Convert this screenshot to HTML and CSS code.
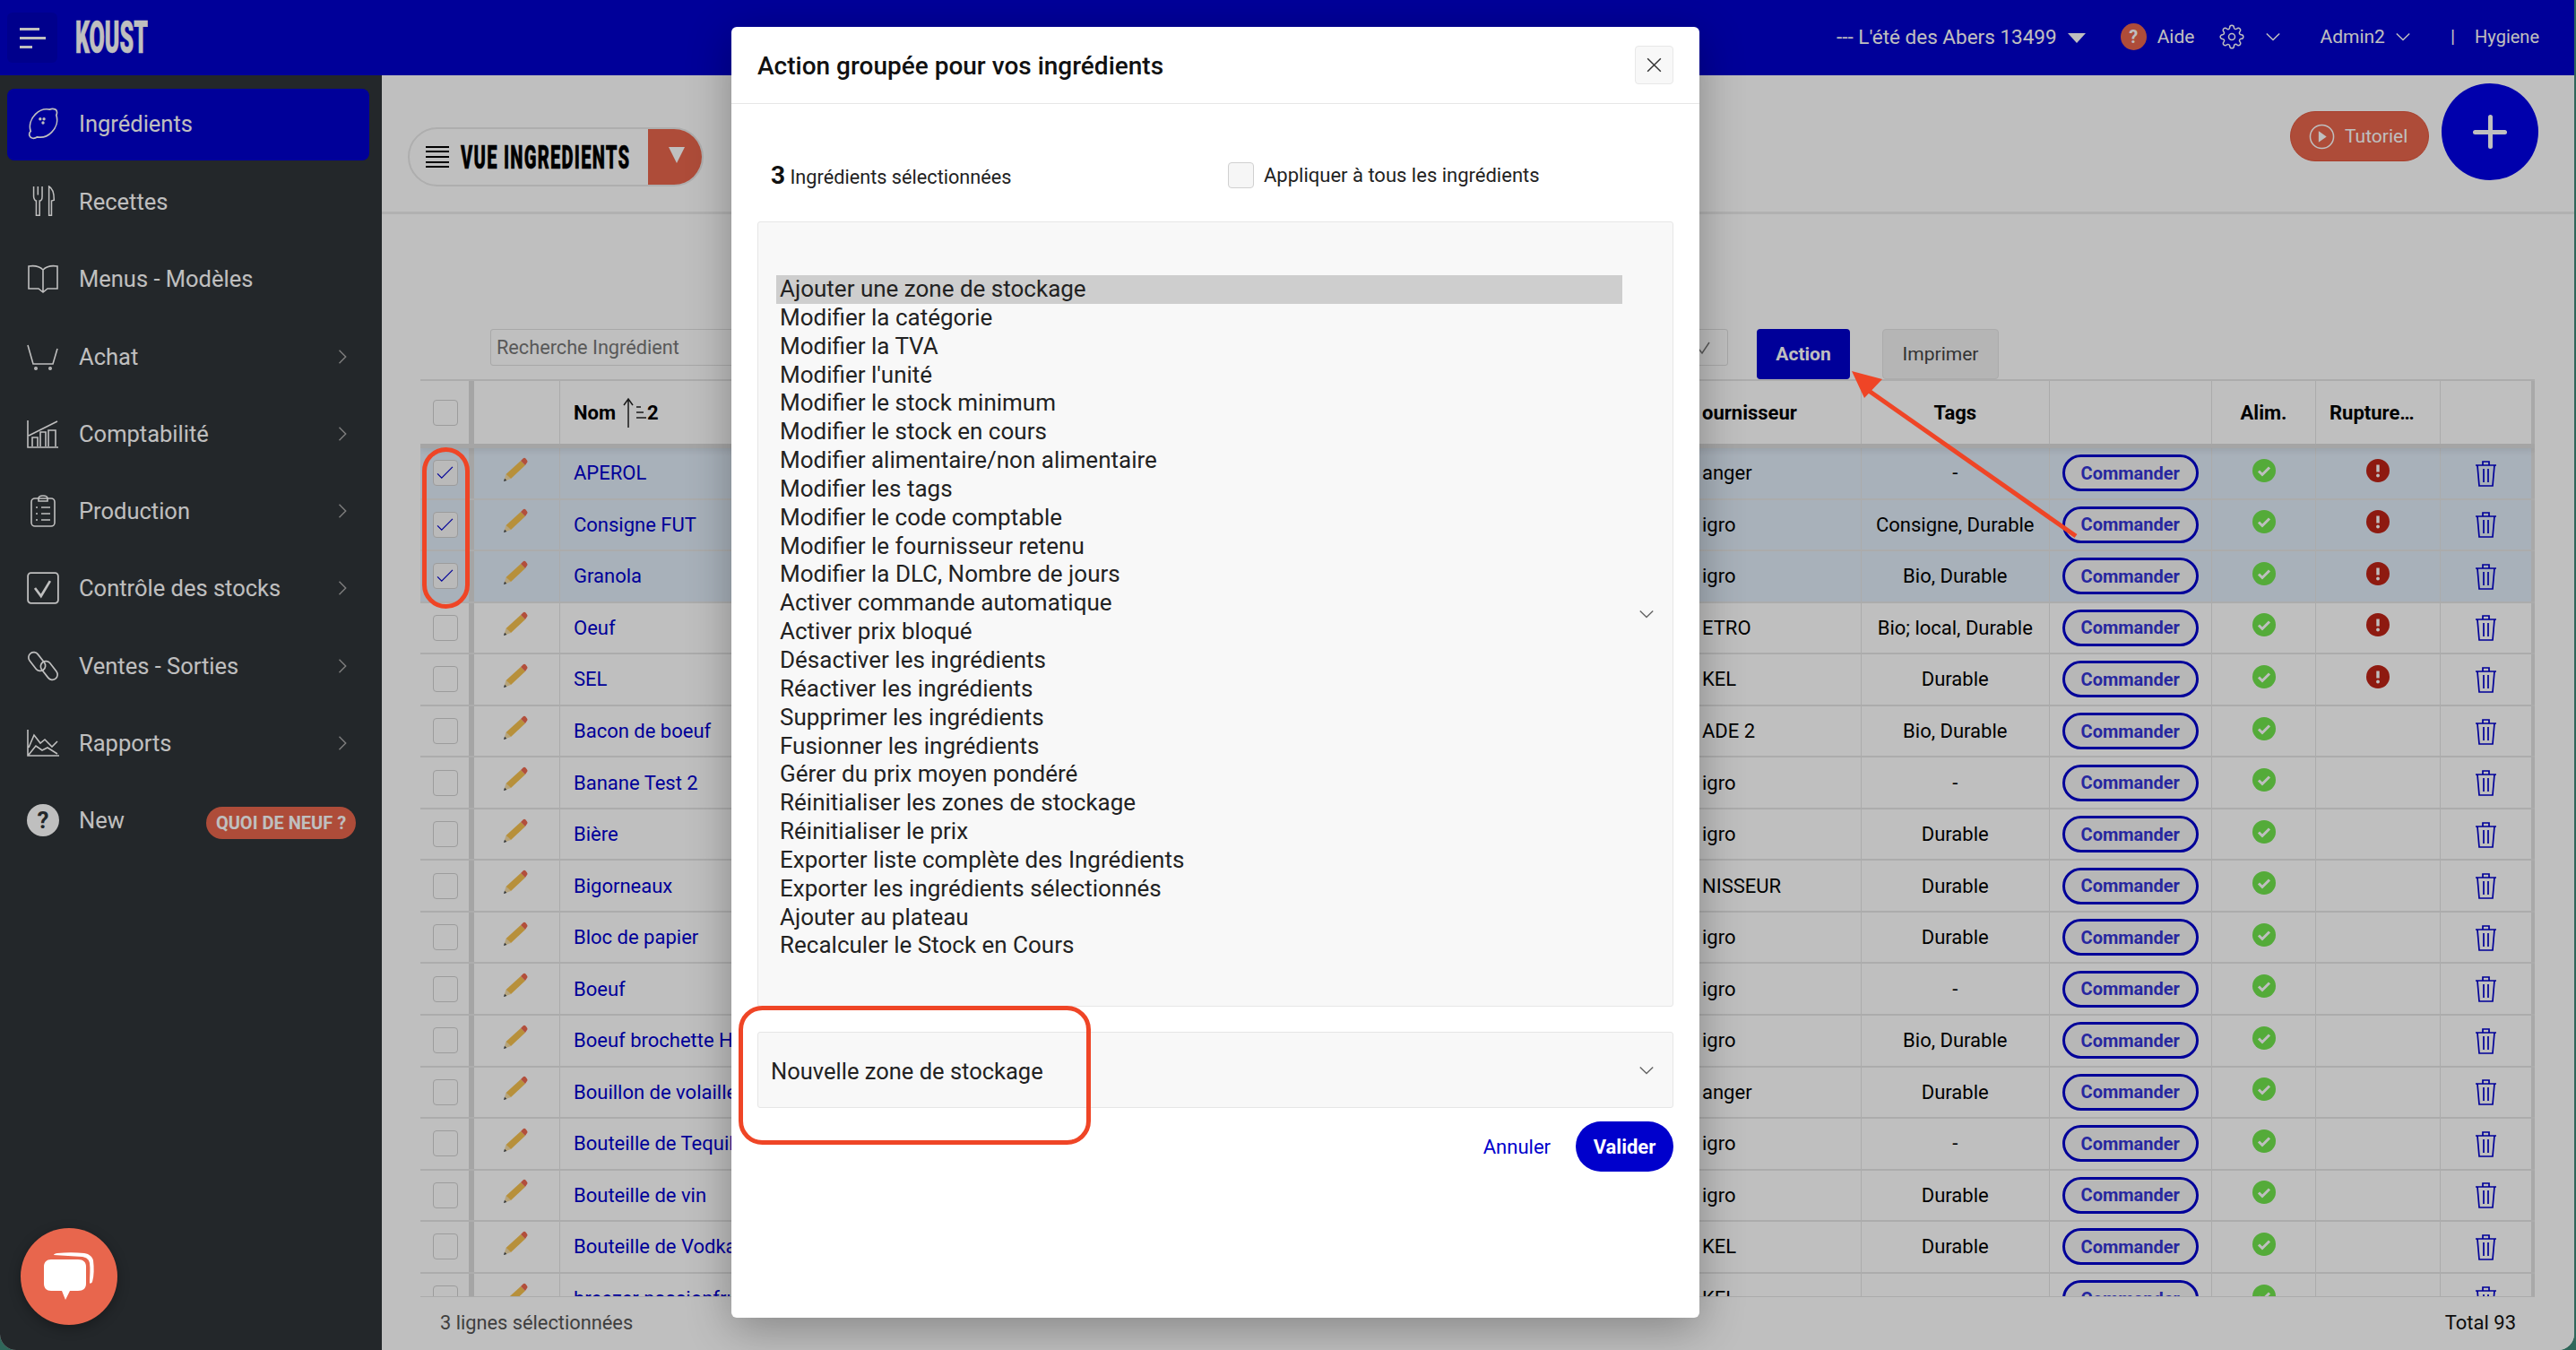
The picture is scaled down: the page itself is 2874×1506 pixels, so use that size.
FILE: index.html
```html
<!DOCTYPE html>
<html lang="fr">
<head>
    <meta charset="UTF-8">
    <title>Koust - Ingrédients</title>
    <link rel="stylesheet" href="styles.css">
</head>
<body>
<svg class="defs" width="0" height="0">
    <symbol id="chev" viewBox="0 0 20 20"><path d="M5 2l8 8-8 8" fill="none" stroke="currentColor" stroke-width="1.6"/></symbol>
    <symbol id="down" viewBox="0 0 20 20"><path d="M2 6l8 8 8-8" fill="none" stroke="currentColor" stroke-width="1.6"/></symbol>
    <symbol id="pencil" viewBox="0 0 28 28">
        <path d="M1 27l2.500-8 5.500 5z" fill="#f2dba8"/><path d="M1 27l1-3.300 2.300 2.200z" fill="#39424e"/>
        <path d="M3.500 19L20 4l5 5L9 24z" fill="#f5c14f"/><path d="M20 4l2.500-2.500a2 2 0 0 1 3 0l1.500 2a2 2 0 0 1 0 2.500L25 9z" fill="#ee6a50"/>
    </symbol>
    <symbol id="check" viewBox="0 0 26 26"><circle cx="13" cy="13" r="13" fill="#70e44d"/><path d="M7 13.500l4 4 8-8" fill="none" stroke="#fff" stroke-width="3"/></symbol>
    <symbol id="alert" viewBox="0 0 26 26"><circle cx="13" cy="13" r="13" fill="#be2316"/><path d="M13 6.500v8" stroke="#fff" stroke-width="3.400"/><circle cx="13" cy="18.500" r="1.900" fill="#fff"/></symbol>
    <symbol id="trash" viewBox="0 0 25 30"><path d="M1 6h23M9 6V2h7v4M3 6l2 23h15l2-23M10 10v15M15 10v15" fill="none" stroke="currentColor" stroke-width="1.700"/></symbol>
    <symbol id="tick" viewBox="0 0 20 16"><path d="M1 9l5 5L19 1" fill="none" stroke="currentColor" stroke-width="1.300"/></symbol>
</svg>

<div class="app">
    <header class="topbar">
        <div class="brand">
            <button class="burger"><i></i><i></i><i></i></button>
            <span class="logo">KOUST</span>
        </div>
        <nav class="topnav">
            <span class="site">--- L'été des Abers 13499</span>
            <span class="tri"></span>
            <span class="help">?</span>
            <span class="aide">Aide</span>
            <svg class="gear" viewBox="0 0 24 24" fill="none" stroke="currentColor" stroke-width="1.300"><circle cx="12" cy="12" r="3"/><path d="M19.400 15a1.650 1.650 0 0 0 .33 1.820l.06.06a2 2 0 0 1 0 2.830 2 2 0 0 1-2.830 0l-.06-.06a1.650 1.650 0 0 0-1.820-.33 1.650 1.650 0 0 0-1 1.510V21a2 2 0 0 1-2 2 2 2 0 0 1-2-2v-.09A1.650 1.650 0 0 0 9 19.400a1.650 1.650 0 0 0-1.820.33l-.06.06a2 2 0 0 1-2.830 0 2 2 0 0 1 0-2.830l.06-.06a1.650 1.650 0 0 0 .33-1.820 1.650 1.650 0 0 0-1.510-1H3a2 2 0 0 1-2-2 2 2 0 0 1 2-2h.09A1.650 1.650 0 0 0 4.600 9a1.650 1.650 0 0 0-.33-1.820l-.06-.06a2 2 0 0 1 0-2.830 2 2 0 0 1 2.830 0l.06.06a1.650 1.650 0 0 0 1.820.33H9a1.650 1.650 0 0 0 1-1.510V3a2 2 0 0 1 2-2 2 2 0 0 1 2 2v.09a1.650 1.650 0 0 0 1 1.510 1.650 1.650 0 0 0 1.820-.33l.06-.06a2 2 0 0 1 2.830 0 2 2 0 0 1 0 2.830l-.06.06a1.650 1.650 0 0 0-.33 1.820V9a1.650 1.650 0 0 0 1.510 1H21a2 2 0 0 1 2 2 2 2 0 0 1-2 2h-.09a1.650 1.650 0 0 0-1.510 1z"/></svg>
            <svg class="tchev tchev-a"><use href="#down"/></svg>
            <span class="admin">Admin2</span>
            <svg class="tchev tchev-b"><use href="#down"/></svg>
            <span class="pipe">|</span>
            <span class="hyg">Hygiene</span>
        </nav>
    </header>

    <div class="body">
        <aside class="sidebar">
            <ul class="menu">
                <li class="active"><svg viewBox="0 0 34 34" fill="none" stroke="currentColor" stroke-width="1.600"><path d="M30 2c2 1 2 4 1 6 2 6 0 13-5 18-4 4-10 6-15 5-3 2-7 2-8-1-1-2 0-4 1-5-2-6 0-13 5-18 4-4 10-6 15-5 2-1 4-1 6 0z"/><circle cx="14" cy="12" r=".8"/><circle cx="18" cy="12" r=".8"/><circle cx="17" cy="16" r=".8"/></svg><span>Ingrédients</span></li>
                <li><svg viewBox="0 0 34 38" fill="none" stroke="currentColor" stroke-width="1.600"><path d="M6 1v12c0 3 2 5 3 5v17h4V18c2 0 3-2 3-5V1M11 1v10M24 35V1c4 2 6 9 6 16l-3 1v17z"/></svg><span>Recettes</span></li>
                <li><svg viewBox="0 0 36 34" fill="none" stroke="currentColor" stroke-width="1.600"><path d="M18 7C14 3 8 2 2 3v25h11l5 4 5-4h11V3c-6-1-12 0-16 4zM18 7v24"/></svg><span>Menus - Modèles</span></li>
                <li class="more"><svg viewBox="0 0 36 30" fill="none" stroke="currentColor" stroke-width="1.600"><path d="M1 2l6 21h22l5-17"/><circle cx="10" cy="28" r="1.200"/><circle cx="26" cy="28" r="1.200"/></svg><span>Achat</span><svg class="chev"><use href="#chev"/></svg></li>
                <li class="more"><svg viewBox="0 0 36 32" fill="none" stroke="currentColor" stroke-width="1.600"><path d="M1 1v30h34M2 18L34 2M6 30V20h6v10M15 30V14h6v16M24 30V12h8v18"/></svg><span>Comptabilité</span><svg class="chev"><use href="#chev"/></svg></li>
                <li class="more"><svg viewBox="0 0 30 36" fill="none" stroke="currentColor" stroke-width="1.600"><rect x="2" y="4" width="26" height="31" rx="4"/><path d="M10 4c0-2 2-3 5-3s5 1 5 3v3H10zM13 14h10M13 21h10M13 28h10M7 14h2M7 21h2M7 28h2"/></svg><span>Production</span><svg class="chev"><use href="#chev"/></svg></li>
                <li class="more"><svg viewBox="0 0 32 32" fill="none" stroke="currentColor" stroke-width="1.600"><rect x="1" y="1" width="30" height="30" rx="3"/><path d="M8 16l6 8 9-15" stroke-width="2.400"/></svg><span>Contrôle des stocks</span><svg class="chev"><use href="#chev"/></svg></li>
                <li class="more"><svg viewBox="0 0 34 34" fill="none" stroke="currentColor" stroke-width="1.600"><rect x="0" y="7" width="22" height="11" rx="5.500" transform="rotate(52 11 12)"/><rect x="12" y="16" width="22" height="11" rx="5.500" transform="rotate(52 23 22)"/></svg><span>Ventes - Sorties</span><svg class="chev"><use href="#chev"/></svg></li>
                <li class="more"><svg viewBox="0 0 36 30" fill="none" stroke="currentColor" stroke-width="1.600"><path d="M1 0v29h35M2 20L8 6l7 9 5-4 8 8 6-6M2 28l8-10 7 5 6-3 11 7"/></svg><span>Rapports</span><svg class="chev"><use href="#chev"/></svg></li>
                <li class="news"><span class="qmark">?</span><span>New</span><b class="badge">QUOI DE NEUF ?</b></li>
            </ul>
        </aside>

        <main class="content">
            <div class="subhead">
                <div class="view-pill">
                    <div class="view-label"><span class="lines"><i></i><i></i><i></i><i></i><i></i></span><strong>VUE INGREDIENTS</strong></div>
                    <div class="view-arrow"></div>
                </div>
                <div class="subhead-right">
                    <button class="tuto"><svg viewBox="0 0 30 30" fill="none" stroke="currentColor" stroke-width="1.600"><circle cx="15" cy="15" r="13.500"/><path d="M12 10l7 5-7 5z" fill="currentColor"/></svg>Tutoriel</button>
                    <button class="plus"><i></i><i></i></button>
                </div>
            </div>

            <div class="toolbar">
                <div class="search">Recherche Ingrédient</div>
                <div class="filter"><svg viewBox="0 0 20 20" fill="none" stroke="currentColor" stroke-width="1.500"><path d="M4 11l4 5 8-12"/></svg></div>
                <button class="btn-action">Action</button>
                <button class="btn-print">Imprimer</button>
            </div>

            <div class="table" id="table">
                <div class="row head">
                    <div class="cell"><span class="box"></span></div>
                    <div class="cell"></div>
                    <div class="cell name">Nom
                        <svg class="sort-arrow" viewBox="0 0 14 34" fill="none" stroke="#222" stroke-width="1.500"><path d="M7 34V2M2 9l5-7 5 7"/></svg>
                        <svg class="sort-lines" viewBox="0 0 11 18" stroke="#222" stroke-width="1.700"><path d="M0 3h5M0 9h8M0 15h11"/></svg>2
                    </div>
                    <div class="cell four">ournisseur</div>
                    <div class="cell mid">Tags</div>
                    <div class="cell"></div>
                    <div class="cell mid">Alim.</div>
                    <div class="cell rupt">Rupture…</div>
                    <div class="cell"></div>
                </div>
            </div>

            <div class="footline">
                <span>3 lignes sélectionnées</span>
                <span class="total">Total 93</span>
            </div>
        </main>
    </div>
</div>

<div class="overlay"></div>

<div class="modal">
    <div class="modal-head">
        <h2>Action groupée pour vos ingrédients</h2>
        <button class="close"><svg viewBox="0 0 20 20" fill="none" stroke="currentColor" stroke-width="1.400"><path d="M3 3l14 14M17 3L3 17"/></svg></button>
    </div>
    <div class="modal-body">
        <div class="count-line">
            <div class="count"><b>3</b> Ingrédients sélectionnées</div>
            <label class="apply"><span class="box light"></span>Appliquer à tous les ingrédients</label>
        </div>
        <div class="listbox">
            <ul id="actions"></ul>
            <svg class="lchev"><use href="#down"/></svg>
        </div>
        <div class="selectbox">Nouvelle zone de stockage<svg class="lchev"><use href="#down"/></svg></div>
        <div class="modal-foot">
            <a class="cancel">Annuler</a>
            <button class="ok">Valider</button>
        </div>
    </div>
</div>

<button class="chat">
    <svg viewBox="0 0 58 56"><path d="M12 3c0-1 2-2 4-2 10-1 20-1 30 0 6 1 9 4 10 8 1 8 1 17-1 24-1 2-3 2-3 1 0-8 1-15 0-22-1-4-3-6-8-7-10-1-22-1-32-2z" fill="#fff"/><path d="M9 8h30c6 0 9 3 9 8v19c0 5-3 8-9 8H30l-5 10-4-10H9c-5 0-8-3-8-8V16c0-5 3-8 8-8z" fill="#fff"/></svg>
</button>

<!-- annotations -->
<svg class="marks" viewBox="0 0 2874 1506">
    <rect x="473.500" y="501.500" width="48" height="175" rx="24" />
    <rect x="826.500" y="1124.500" width="388" height="150" rx="24" />
    <path d="M2316 598L2078 431"/>
    <path class="tip" d="M2066 414l34 9-20 21z"/>
</svg>

<script>
    var rows = [
        ['APEROL', 'anger', '-', 1], ['Consigne FUT', 'igro', 'Consigne, Durable', 1], ['Granola', 'igro', 'Bio, Durable', 1],
        ['Oeuf', 'ETRO', 'Bio; local, Durable', 2], ['SEL', 'KEL', 'Durable', 2], ['Bacon de boeuf', 'ADE 2', 'Bio, Durable', 0],
        ['Banane Test 2', 'igro', '-', 0], ['Bière', 'igro', 'Durable', 0], ['Bigorneaux', 'NISSEUR', 'Durable', 0],
        ['Bloc de papier', 'igro', 'Durable', 0], ['Boeuf', 'igro', '-', 0], ['Boeuf brochette Hallal', 'igro', 'Bio, Durable', 0],
        ['Bouillon de volaille', 'anger', 'Durable', 0], ['Bouteille de Tequila', 'igro', '-', 0], ['Bouteille de vin', 'igro', 'Durable', 0],
        ['Bouteille de Vodka', 'KEL', 'Durable', 0], ['breezer passionfruit', 'KEL', '', 0]
    ];
    var html = '';
    rows.forEach(function (r) {
        var sel = r[3] === 1;
        html += '<div class="row' + (sel ? ' sel' : '') + '">'
            + '<div class="cell"><span class="box">' + (sel ? '<svg class="tick"><use href="#tick"/></svg>' : '') + '</span></div>'
            + '<div class="cell mid"><svg class="pen"><use href="#pencil"/></svg></div>'
            + '<div class="cell name link">' + r[0] + '</div>'
            + '<div class="cell four">' + r[1] + '</div>'
            + '<div class="cell mid">' + r[2] + '</div>'
            + '<div class="cell mid"><button class="order">Commander</button></div>'
            + '<div class="cell mid"><svg class="dot"><use href="#check"/></svg></div>'
            + '<div class="cell mid">' + (r[3] ? '<svg class="dot"><use href="#alert"/></svg>' : '') + '</div>'
            + '<div class="cell mid"><svg class="bin"><use href="#trash"/></svg></div>'
            + '</div>';
    });
    document.getElementById('table').insertAdjacentHTML('beforeend', html);

    var actions = ['Ajouter une zone de stockage', 'Modifier la catégorie', 'Modifier la TVA', "Modifier l'unité",
        'Modifier le stock minimum', 'Modifier le stock en cours', 'Modifier alimentaire/non alimentaire', 'Modifier les tags',
        'Modifier le code comptable', 'Modifier le fournisseur retenu', 'Modifier la DLC, Nombre de jours',
        'Activer commande automatique', 'Activer prix bloqué', 'Désactiver les ingrédients', 'Réactiver les ingrédients',
        'Supprimer les ingrédients', 'Fusionner les ingrédients', 'Gérer du prix moyen pondéré',
        'Réinitialiser les zones de stockage', 'Réinitialiser le prix', 'Exporter liste complète des Ingrédients',
        'Exporter les ingrédients sélectionnés', 'Ajouter au plateau', 'Recalculer le Stock en Cours'];
    document.getElementById('actions').innerHTML = actions.map(function (a) { return '<li>' + a + '</li>'; }).join('');
</script>
</body>
</html>
```

FILE: styles.css
```css
* {
    box-sizing: border-box;
}

html, body {
    margin: 0;
    height: 100%;
    overflow: hidden;
    background: #3f8a78;
}

body {
    font-family: Roboto, "Liberation Sans", sans-serif;
    font-size: 22px;
    color: #000;
    width: 2874px;
    height: 1506px;
    position: relative;
}

button {
    font-family: inherit;
    border: 0;
    padding: 0;
}

ul {
    list-style: none;
    margin: 0;
    padding: 0;
}

.defs {
    position: absolute;
}

.app {
    width: 2872px;
    height: 1506px;
    display: flex;
    flex-direction: column;
    background: #fff;
    border-radius: 0 0 18px 18px;
    overflow: hidden;
}

/* top bar */
.topbar {
    height: 84px;
    flex: none;
    background: #0000cc;
    color: #fff;
    display: flex;
    align-items: center;
    justify-content: space-between;
    padding-left: 8px;
}

.brand {
    display: flex;
    align-items: center;
    gap: 20px;
}

.burger {
    width: 56px;
    height: 56px;
    background: #0000bb;
    border-radius: 6px;
    display: flex;
    flex-direction: column;
    justify-content: center;
    gap: 7px;
    padding-left: 14px;
}

.burger i {
    display: block;
    height: 3px;
    width: 29px;
    background: #fff;
}

.burger i:first-child {
    width: 22px;
}

.burger i:last-child {
    width: 14px;
}

.logo {
    font-weight: 900;
    font-size: 50px;
    line-height: 1;
    -webkit-text-stroke: .6px #fff;
    display: inline-block;
    transform: scaleX(.5);
    transform-origin: left center;
    width: 81px;
}

.topnav {
    display: flex;
    align-items: center;
    font-size: 21px;
    padding: 0 39px 2px 0;
}

.site {
    font-size: 22.500px;
}

.tri {
    width: 0;
    height: 0;
    border-left: 10px solid transparent;
    border-right: 10px solid transparent;
    border-top: 11px solid #fff;
    margin: 2px 39px 0 12px;
}

.help {
    width: 29px;
    height: 30px;
    border-radius: 50%;
    background: #e8664d;
    font-weight: 700;
    font-size: 20px;
    text-align: center;
    line-height: 30px;
    margin-right: 12px;
}

.gear {
    width: 28px;
    height: 30px;
    margin-left: 28px;
}

.tchev {
    width: 18px;
    height: 18px;
}

.tchev-a {
    margin: 0 43px 0 23px;
}

.tchev-b {
    margin: 0 44px 0 11px;
}

.pipe {
    margin-right: 22px;
}

.hyg {
    font-size: 20px;
}

/* sidebar */
.body {
    flex: 1;
    display: flex;
    min-height: 0;
}

.sidebar {
    width: 426px;
    flex: none;
    background: #2f3438;
    color: #fff;
    padding: 15px 14px 0 8px;
}

.menu li {
    height: 86.300px;
    display: flex;
    align-items: center;
    padding: 0 0 7px 22px;
    font-size: 25.500px;
    gap: 22px;
    position: relative;
}

.menu li > svg:first-child {
    width: 36px;
    height: 36px;
    flex: none;
}

.menu li.active {
    height: 80px;
    margin-bottom: 6.300px;
    padding-bottom: 3px;
    background: #0000cc;
    border-radius: 8px;
}

.chev {
    position: absolute;
    right: 20px;
    width: 18px;
    height: 18px;
    color: #a8a8a8;
}

.qmark {
    width: 36px;
    height: 36px;
    flex: none;
    border-radius: 50%;
    background: #fff;
    color: #2f3438;
    font-weight: 700;
    font-size: 26px;
    text-align: center;
    line-height: 36px;
}

.badge {
    position: absolute;
    right: 15px;
    top: 24px;
    width: 167px;
    height: 36px;
    line-height: 36px;
    border-radius: 18px;
    background: #e8664d;
    font-size: 20px;
    font-weight: 700;
    text-align: center;
}

/* content */
.content {
    flex: 1;
    min-width: 0;
    position: relative;
    display: flex;
    flex-direction: column;
    background: #fff;
}

.subhead {
    height: 155px;
    flex: none;
    border-bottom: 3px solid #ededed;
    display: flex;
    justify-content: space-between;
    padding: 58px 40px 0 29px;
}

.view-pill {
    width: 330px;
    height: 66px;
    border: 2px solid #e8e8e8;
    border-radius: 33px;
    display: flex;
    overflow: hidden;
}

.view-label {
    flex: 1;
    display: flex;
    align-items: center;
    gap: 13px;
    padding-left: 18px;
}

.view-label strong {
    font-size: 36px;
    font-weight: 900;
    line-height: 1;
    letter-spacing: 2.200px;
    -webkit-text-stroke: .5px #000;
    display: inline-block;
    transform: scaleX(.56);
    transform-origin: left center;
    width: 190px;
    margin-top: 2px;
    white-space: nowrap;
}

.lines {
    width: 26px;
    display: flex;
    flex-direction: column;
    gap: 3.700px;
    flex: none;
}

.lines i {
    display: block;
    height: 2px;
    background: #000;
}

.view-arrow {
    width: 60px;
    background: #e8664d;
    display: flex;
    align-items: center;
    justify-content: center;
}

.view-arrow::after {
    content: "";
    border-left: 9px solid transparent;
    border-right: 9px solid transparent;
    border-top: 18px solid #fff;
    margin: -4px -4px 0 0;
}

.subhead-right {
    display: flex;
    align-items: flex-start;
    gap: 14px;
    margin-top: -49px;
}

.tuto {
    margin-top: 31px;
    width: 155px;
    height: 56px;
    border: 1px solid #e2553b;
    border-radius: 28px;
    background: #e8664d;
    color: #fff;
    font-size: 21px;
    display: flex;
    align-items: center;
    gap: 11px;
    padding-left: 20px;
}

.tuto svg {
    width: 29px;
    height: 29px;
}

.plus {
    width: 108px;
    height: 108px;
    border-radius: 50%;
    background: #0000e6;
    position: relative;
}

.plus i {
    position: absolute;
    background: #fff;
    border-radius: 3px;
    left: 35px;
    top: 51.500px;
    width: 38px;
    height: 5px;
}

.plus i + i {
    left: 51.500px;
    top: 35px;
    width: 5px;
    height: 38px;
}

.toolbar {
    position: absolute;
    top: 283px;
    left: 0;
    right: 0;
    height: 56px;
}

.search {
    position: absolute;
    left: 121px;
    width: 400px;
    height: 41px;
    border: 1px solid #e0e0e0;
    border-radius: 3px;
    padding: 7px 6px;
    color: #777;
    font-size: 21.700px;
}

.filter {
    position: absolute;
    left: 1400px;
    width: 102px;
    height: 41px;
    border: 1px solid #e0e0e0;
    border-radius: 3px;
    color: #777;
}

.filter svg {
    position: absolute;
    right: 16px;
    top: 10px;
    width: 20px;
    height: 20px;
}

.btn-action {
    position: absolute;
    left: 1534px;
    width: 104px;
    height: 56px;
    background: #0000cc;
    color: #fff;
    font-size: 21px;
    font-weight: 700;
    border-radius: 4px;
}

.btn-print {
    position: absolute;
    left: 1674px;
    width: 130px;
    height: 56px;
    background: #f2f2f2;
    border: 1px solid #e4e4e4;
    color: #444;
    font-size: 21px;
    border-radius: 4px;
}

/* table */
.table {
    position: absolute;
    left: 43px;
    top: 339px;
    width: 2359px;
    height: 1024px;
    overflow: hidden;
    border-bottom: 1px solid #e4e4e4;
}

.row {
    display: grid;
    grid-template-columns: 54px 102px 722px 730px 209.500px 181.500px 116px 139px 105px;
    height: 57.550px;
    border-bottom: 2px solid #e6e6e6;
}

.row.head {
    height: 77px;
    border-top: 2px solid #e6e6e6;
    border-bottom: 5px solid #dcdcdc;
    font-weight: 700;
    position: relative;
    box-shadow: 0 3px 7px rgba(0, 0, 0, .08);
}

.row.sel {
    background: #e1ecf8;
}

.cell {
    display: flex;
    align-items: center;
    border-right: 1px solid #e4e4e4;
    min-width: 0;
    white-space: nowrap;
    overflow: hidden;
}

.cell:first-child {
    justify-content: center;
    border-right: 0;
    padding-left: 2px;
}

.cell:nth-child(2) {
    border-left: 6px solid #dcdcdc;
}

.cell:last-child {
    border-right: 4px solid #e2e2e2;
}

.mid {
    justify-content: center;
}

.rupt {
    padding-left: 15px;
}

.name {
    padding-left: 15px;
}

.link {
    color: #0000cc;
}

.four {
    padding-left: 552px;
}

.sort-arrow {
    width: 14px;
    height: 34px;
    margin: 0 2px 0 7px;
    flex: none;
}

.sort-lines {
    width: 11px;
    height: 18px;
    margin-right: 1px;
    flex: none;
}

.box {
    display: block;
    width: 28px;
    height: 29px;
    border: 1px solid #d0d0d0;
    border-radius: 4px;
    background: #f6f6f6;
    flex: none;
}

.row .box {
    background: transparent;
}

.row.sel .box {
    background: #f8f8f8;
}

.tick {
    display: block;
    width: 19px;
    height: 15px;
    margin: 6px 0 0 3px;
    color: #0000cc;
}

.pen {
    width: 28px;
    height: 28px;
    margin: -8px 0 0 -4px;
}

.order {
    width: 152px;
    height: 41px;
    background: #f5f5f5;
    border: 3px solid #0000cc;
    border-radius: 21px;
    color: #3535d5;
    font-size: 20px;
    font-weight: 700;
}

.dot {
    width: 26px;
    height: 26px;
    margin-top: -6px;
}

.bin {
    width: 25px;
    height: 30px;
    color: #0000cc;
}

.footline {
    position: absolute;
    left: 65px;
    right: 65px;
    top: 1379px;
    display: flex;
    justify-content: space-between;
    font-size: 21.800px;
    color: #555;
}

.total {
    color: #111;
    font-size: 22px;
}

/* modal */
.overlay {
    position: absolute;
    inset: 0;
    background: rgba(0, 0, 0, .25);
}

.modal {
    position: absolute;
    left: 816px;
    top: 30px;
    width: 1080px;
    height: 1440px;
    background: #fff;
    border-radius: 6px;
    box-shadow: 0 12px 50px rgba(0, 0, 0, .3);
}

.modal-head {
    height: 86px;
    border-bottom: 1px solid #e6e6e6;
    display: flex;
    align-items: center;
    justify-content: space-between;
    padding: 0 29px;
}

.modal-head h2 {
    margin: 1px 0 0;
    font-size: 28px;
    font-weight: 500;
    color: #111;
}

.close {
    width: 43px;
    height: 43px;
    background: #f8f8f8;
    border: 1px solid #e8e8e8;
    border-radius: 4px;
    padding: 10px;
    color: #333;
    margin-top: -1px;
}

.close svg {
    display: block;
}

.modal-body {
    padding: 0 29px;
}

.count-line {
    height: 131px;
    display: flex;
    align-items: flex-start;
    padding: 65px 0 0 15px;
}

.count {
    width: 510px;
    margin-top: -2px;
    font-size: 21.700px;
    color: #222;
}

.count b {
    font-size: 28px;
    font-weight: 700;
    color: #111;
}

.apply {
    display: flex;
    align-items: center;
    gap: 11px;
    font-size: 22px;
    color: #222;
}

.apply .box {
    width: 29px;
    height: 29px;
}

.listbox {
    height: 876px;
    background: #f8f8f8;
    border: 1px solid #e6e6e6;
    border-radius: 3px;
    position: relative;
    padding: 59px 0 0 20px;
}

.listbox li {
    width: 944px;
    height: 31.850px;
    line-height: 30px;
    font-size: 26px;
    padding-left: 4px;
    color: #222;
}

.listbox li:first-child {
    background: #cecece;
}

.lchev {
    position: absolute;
    right: 20px;
    top: 50%;
    margin-top: -9px;
    width: 18px;
    height: 18px;
    color: #666;
}

.selectbox {
    position: relative;
    height: 85px;
    margin-top: 28px;
    background: #f8f8f8;
    border: 1px solid #e6e6e6;
    border-radius: 3px;
    padding: 2px 0 0 14px;
    display: flex;
    align-items: center;
    font-size: 25.500px;
    color: #222;
}

.modal-foot {
    display: flex;
    justify-content: flex-end;
    align-items: center;
    gap: 28px;
    margin-top: 15px;
}

.cancel {
    color: #0000cc;
    font-size: 22px;
}

.ok {
    width: 109px;
    height: 56px;
    border-radius: 28px;
    background: #0000cc;
    color: #fff;
    font-size: 22px;
    font-weight: 700;
}

/* chat bubble + annotations lie over everything */
.chat {
    position: absolute;
    left: 23px;
    top: 1370px;
    width: 108px;
    height: 108px;
    border-radius: 50%;
    background: #e8664d;
    box-shadow: 0 4px 14px rgba(0, 0, 0, .3);
    padding: 27px 25px;
}

.chat svg {
    display: block;
}

.marks {
    position: absolute;
    inset: 0;
    width: 2874px;
    height: 1506px;
    pointer-events: none;
    fill: none;
    stroke: #ef4526;
    stroke-width: 5;
}

.marks .tip {
    fill: #ef4526;
    stroke: none;
}
```
